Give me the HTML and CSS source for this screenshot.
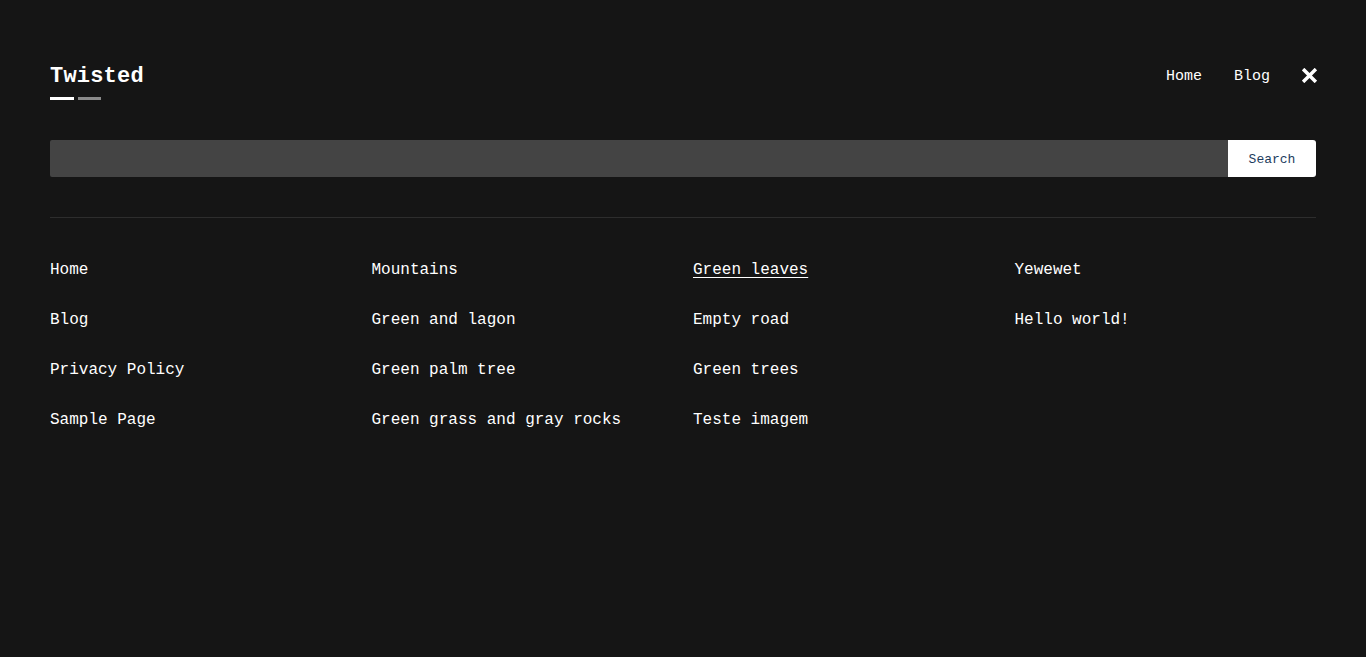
FILE: index.html
```html
<!DOCTYPE html>
<html lang="en">
<head>
<meta charset="utf-8">
<title>Twisted</title>
<link rel="stylesheet" href="styles.css">
</head>
<body>
<div class="page">
  <header class="header">
    <div class="brand">
      <div class="logo">Twisted</div>
      <div class="bars"><span class="bar bar-white"></span><span class="bar bar-gray"></span></div>
    </div>
    <nav class="nav">
      <a href="#">Home</a>
      <a href="#">Blog</a>
      <button class="close" aria-label="Close">
        <svg width="15" height="15" viewBox="0 0 15 15"><path d="M2.3 2.3 L12.7 12.7 M12.7 2.3 L2.3 12.7" stroke="#fff" stroke-width="3.5" stroke-linecap="square" fill="none"/></svg>
      </button>
    </nav>
  </header>
  <form class="search">
    <input class="search-input" type="text">
    <button class="search-btn" type="button">Search</button>
  </form>
  <hr class="divider">
  <div class="links">
    <ul class="col">
      <li><a href="#">Home</a></li>
      <li><a href="#">Blog</a></li>
      <li><a href="#">Privacy Policy</a></li>
      <li><a href="#">Sample Page</a></li>
    </ul>
    <ul class="col">
      <li><a href="#">Mountains</a></li>
      <li><a href="#">Green and lagon</a></li>
      <li><a href="#">Green palm tree</a></li>
      <li><a href="#">Green grass and gray rocks</a></li>
    </ul>
    <ul class="col">
      <li><a href="#" class="active">Green leaves</a></li>
      <li><a href="#">Empty road</a></li>
      <li><a href="#">Green trees</a></li>
      <li><a href="#">Teste imagem</a></li>
    </ul>
    <ul class="col">
      <li><a href="#">Yewewet</a></li>
      <li><a href="#">Hello world!</a></li>
    </ul>
  </div>
</div>
</body>
</html>
```
FILE: styles.css
```css
* { box-sizing: border-box; }
html, body { margin: 0; padding: 0; }
body {
  background: #151515;
  color: #fff;
  font-family: "Liberation Mono", "DejaVu Sans Mono", monospace;
  height: 657px;
  overflow: hidden;
}
a { color: #fff; text-decoration: none; }
.page { padding: 0 50px; }
.header {
  display: flex;
  justify-content: space-between;
  align-items: flex-start;
  padding-top: 63px;
}
.logo {
  font-size: 22px;
  font-weight: bold;
  line-height: 28px;
  letter-spacing: 0.2px;
}
.bars { display: flex; gap: 4px; margin-top: 6px; }
.bar { display: block; height: 3px; }
.bar-white { width: 24px; background: #fff; }
.bar-gray { width: 23px; background: #8a8a8a; }
.nav {
  display: flex;
  align-items: center;
  gap: 32px;
  font-size: 15px;
  line-height: 28px;
}
.nav a { display: block; }
.close {
  background: none;
  border: 0;
  padding: 0;
  width: 15px;
  height: 15px;
  display: flex;
  cursor: pointer;
  margin-right: -1px;
  margin-top: -3px;
}
.search {
  display: flex;
  margin-top: 40px;
  height: 37px;
}
.search-input {
  flex: 1;
  background: #444;
  border: 0;
  border-radius: 2px 0 0 2px;
  outline: none;
  height: 37px;
  color: #fff;
}
.search-btn {
  width: 88px;
  height: 37px;
  background: #fff;
  border: 0;
  border-radius: 0 3px 3px 0;
  color: #1d3c5e;
  font-family: "Liberation Mono", "DejaVu Sans Mono", monospace;
  font-size: 13px;
  padding: 2px 0 0;
}
.divider {
  border: 0;
  border-top: 1px solid #2d2d2d;
  margin: 40px 0 0;
}
.links {
  display: grid;
  grid-template-columns: repeat(4, 1fr);
  column-gap: 20px;
  padding-top: 42px;
}
.col {
  list-style: none;
  margin: 0;
  padding: 0;
  display: flex;
  flex-direction: column;
  gap: 30px;
  font-size: 16px;
  line-height: 20px;
}
.col a.active { text-decoration: underline; text-underline-offset: 3px; }
```
